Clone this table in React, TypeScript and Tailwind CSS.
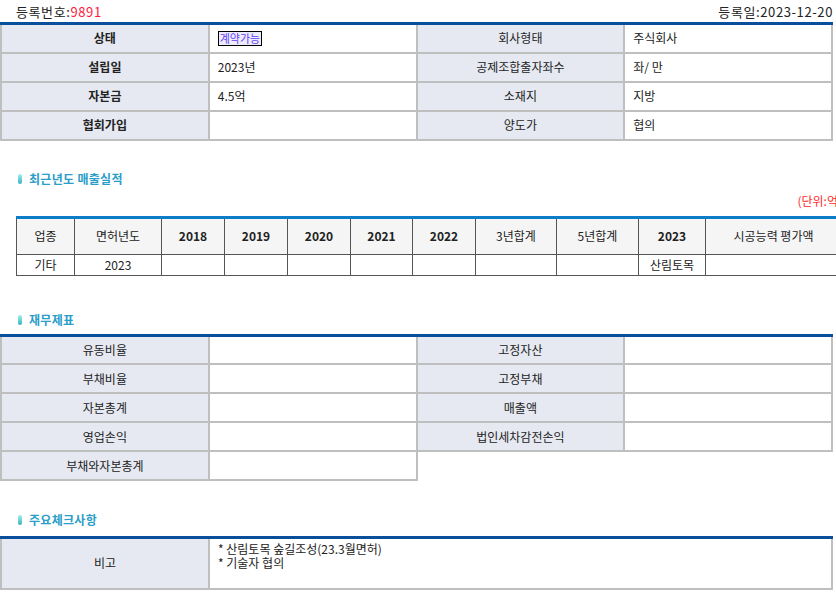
import React from 'react';

const font = "font-['Noto_Sans_CJK_KR','Noto_Sans',sans-serif]";

const basicRows = [
  { l1: '상태', v1: 'badge', l2: '회사형태', v2: '주식회사' },
  { l1: '설립일', v1: '2023년', l2: '공제조합출자좌수', v2: '좌/ 만' },
  { l1: '자본금', v1: '4.5억', l2: '소재지', v2: '지방' },
  { l1: '협회가입', v1: '', l2: '양도가', v2: '협의' },
];

const finRows = [
  ['유동비율', '고정자산'],
  ['부채비율', '고정부채'],
  ['자본총계', '매출액'],
  ['영업손익', '법인세차감전손익'],
  ['부채와자본총계', null],
];

const salesCols = [
  { label: '업종', w: 'w-[58px]', bold: false },
  { label: '면허년도', w: 'w-[87px]', bold: false },
  { label: '2018', w: 'w-[63px]', bold: true },
  { label: '2019', w: 'w-[63px]', bold: true },
  { label: '2020', w: 'w-[63px]', bold: true },
  { label: '2021', w: 'w-[62px]', bold: true },
  { label: '2022', w: 'w-[63px]', bold: true },
  { label: '3년합계', w: 'w-[81px]', bold: false },
  { label: '5년합계', w: 'w-[82px]', bold: false },
  { label: '2023', w: 'w-[67px]', bold: true },
  { label: '시공능력 평가액', w: '', bold: false },
];

const salesData = ['기타', '2023', '', '', '', '', '', '', '', '산림토목', ''];

function SectionTitle({ title }: { title: string }) {
  return (
    <div className="flex items-center gap-[7px] pl-[18px] h-[18px]">
      <span className="w-[4px] h-[10px] rounded-[2px] bg-gradient-to-b from-[#9ff0ee] to-[#2fb4bf]" />
      <span className="text-[12px] font-bold text-[#2a9dc9] tracking-[0.3px]">{title}</span>
    </div>
  );
}

const labelCell = 'border-2 border-[#bfbfbf] bg-[#e6e9f1] text-center text-[12px] text-[#222] h-[29px] p-0';
const valueCell = 'border-2 border-[#bfbfbf] bg-white text-left text-[12px] text-[#222] h-[29px] pl-[8px] py-0';

export default function App() {
  return (
    <div className={`${font} w-[836px] h-[597px] overflow-hidden bg-white text-[#222]`}>
      <div className="w-[850px]">
        {/* Header */}
        <div className="w-[833px] h-[22px] flex justify-between items-start pt-[3px] text-[13px] leading-[18px] tracking-[0.6px]">
          <div className="pl-[16px]">
            등록번호:<span className="text-[#ff1a3c]">9891</span>
          </div>
          <div>등록일:2023-12-20</div>
        </div>

        {/* Basic info */}
        <table className="w-[833px] table-fixed border-collapse border-t-[3px] border-t-[#0a4f9c]">
          <tbody>
            {basicRows.map((r) => (
              <tr key={r.l1}>
                <td className={`${labelCell} font-bold`}>{r.l1}</td>
                <td className={valueCell}>
                  {r.v1 === 'badge' ? (
                    <span className="inline-block border border-black bg-[#ececff] text-[#6a3df0] text-[11px] leading-[13px] px-[1px]">
                      계약가능
                    </span>
                  ) : (
                    r.v1
                  )}
                </td>
                <td className={labelCell}>{r.l2}</td>
                <td className={valueCell}>{r.v2}</td>
              </tr>
            ))}
          </tbody>
        </table>

        {/* Sales */}
        <div className="mt-[29px]">
          <SectionTitle title="최근년도 매출실적" />
        </div>
        <div className="w-[842px] text-right text-[12px] leading-[16px] text-[#ff2a2a] mt-[5px]">(단위:억)</div>
        <div className="pl-[16px] mt-[7px]">
          <table className="w-[826px] table-fixed border-collapse border-t-[3px] border-t-[#0b7cc7]">
            <colgroup>
              {salesCols.map((c) => (
                <col key={c.label} className={c.w} />
              ))}
            </colgroup>
            <thead>
              <tr>
                {salesCols.map((c) => (
                  <th
                    key={c.label}
                    className={`border border-[#555] bg-[#f5f5f5] h-[37px] p-0 text-[12px] text-[#222] text-center ${c.bold ? 'font-bold' : 'font-normal'}`}
                  >
                    {c.label}
                  </th>
                ))}
              </tr>
            </thead>
            <tbody>
              <tr>
                {salesData.map((v, i) => (
                  <td key={i} className="border border-[#555] h-[21px] p-0 text-[12px] text-center text-[#222]">
                    {v}
                  </td>
                ))}
              </tr>
            </tbody>
          </table>
        </div>

        {/* Financial statements */}
        <div className="mt-[35px]">
          <SectionTitle title="재무제표" />
        </div>
        <table className="mt-[5px] w-[833px] table-fixed border-collapse border-t-[3px] border-t-[#0a4f9c]">
          <tbody>
            {finRows.map(([a, b]) => (
              <tr key={a}>
                <td className={labelCell}>{a}</td>
                <td className={valueCell}></td>
                {b ? (
                  <>
                    <td className={labelCell}>{b}</td>
                    <td className={valueCell}></td>
                  </>
                ) : (
                  <td colSpan={2} className="p-0 border-0" />
                )}
              </tr>
            ))}
          </tbody>
        </table>

        {/* Checks */}
        <div className="mt-[30px]">
          <SectionTitle title="주요체크사항" />
        </div>
        <table className="mt-[7px] w-[833px] table-fixed border-collapse border-t-[3px] border-t-[#0a4f9c]">
          <colgroup>
            <col className="w-[208px]" />
            <col />
          </colgroup>
          <tbody>
            <tr>
              <td className="border-2 border-[#bfbfbf] bg-[#e6e9f1] text-center text-[12px] h-[51px] p-0">비고</td>
              <td className="border-2 border-[#bfbfbf] align-top text-[12px] leading-[14px] pl-[8px] pt-[3px]">
                <div>* 산림토목 숲길조성(23.3월면허)</div>
                <div>* 기술자 협의</div>
              </td>
            </tr>
          </tbody>
        </table>
      </div>
    </div>
  );
}
